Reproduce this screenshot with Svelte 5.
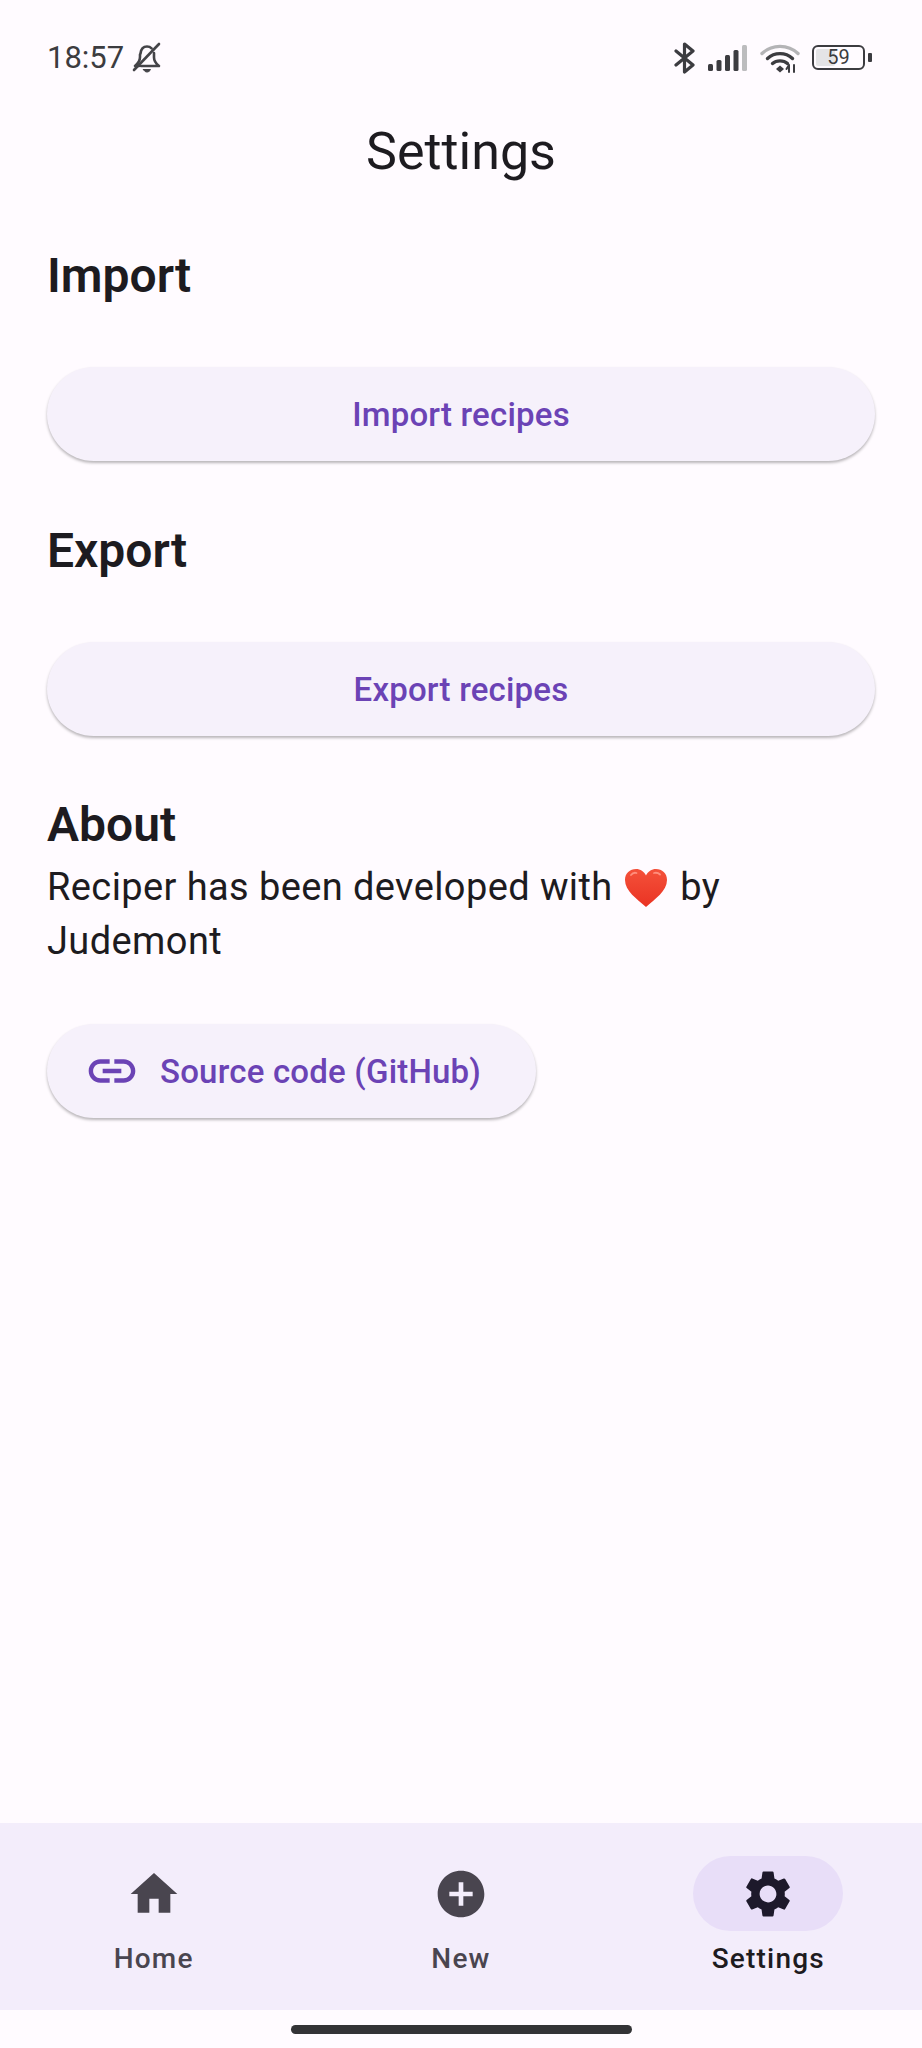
<script>
    const NAV = [
        { label: 'Home', d: 'M10 20v-6h4v6h5v-8h3L12 3 2 12h3v8z' },
        { label: 'New', d: 'M12 2C6.48 2 2 6.48 2 12s4.48 10 10 10 10-4.48 10-10S17.52 2 12 2zm5 11h-4v4h-2v-4H7v-2h4V7h2v4h4v2z' },
        {
            label: 'Settings',
            active: true,
            d: 'M19.14 12.94c.04-.3.06-.61.06-.94 0-.32-.02-.64-.07-.94l2.03-1.58c.18-.14.23-.41.12-.61l-1.92-3.32c-.12-.22-.37-.29-.59-.22l-2.39.96c-.5-.38-1.03-.7-1.62-.94l-.36-2.54c-.04-.24-.24-.41-.48-.41h-3.84c-.24 0-.43.17-.47.41l-.36 2.54c-.59.24-1.13.57-1.62.94l-2.39-.96c-.22-.08-.47 0-.59.22L2.74 8.87c-.12.21-.08.47.12.61l2.03 1.58c-.05.3-.09.63-.09.94s.02.64.07.94l-2.03 1.58c-.18.14-.23.41-.12.61l1.92 3.32c.12.22.37.29.59.22l2.39-.96c.5.38 1.03.7 1.62.94l.36 2.54c.05.24.24.41.48.41h3.84c.24 0 .44-.17.47-.41l.36-2.54c.59-.24 1.13-.56 1.62-.94l2.39.96c.22.08.47 0 .59-.22l1.92-3.32c.12-.22.07-.47-.12-.61l-2.01-1.58zM12 15.6c-1.98 0-3.6-1.62-3.6-3.6s1.62-3.6 3.6-3.6 3.6 1.62 3.6 3.6-1.62 3.6-3.6 3.6z'
        }
    ];
</script>

<div class="page">
    <div class="status">
        <div class="status-left">
            <span class="time">18:57</span>
            <svg class="bell" viewBox="0 0 32 32" fill="none" stroke="#444448" stroke-width="2.6" stroke-linecap="round" stroke-linejoin="round">
                <path d="M9.500 11.500c.5-4.200 3-7 6.500-7 1.800 0 3.400.6 4.600 1.800M23 11v4.500c0 3.500 1.800 6 5 8.500H10" />
                <path d="M9 12.500V15c0 3.500-2 6.500-5 9h4" />
                <path d="M3 28 28 2" />
                <path d="M12.500 27.500h7c-.5 1.500-2 2.500-3.500 2.500s-3-1-3.500-2.500z" fill="#444448" stroke-width="1" />
            </svg>
        </div>
        <div class="status-right">
            <svg class="bt" viewBox="0 0 22 32" fill="none" stroke="#3c3c40" stroke-width="3.200" stroke-linejoin="round" stroke-linecap="round">
                <path d="M2 9 19 23 10.500 30V2L19 9 2 23" />
            </svg>
            <svg class="bars" viewBox="0 0 40 26">
                <rect x="0" y="19" width="5" height="7" rx="1.500" fill="#3c3c40" />
                <rect x="8.500" y="15" width="5" height="11" rx="1.500" fill="#3c3c40" />
                <rect x="17" y="10" width="5" height="16" rx="1.500" fill="#3c3c40" />
                <rect x="25.500" y="5" width="5" height="21" rx="1.500" fill="#3c3c40" />
                <rect x="34" y="0" width="5" height="26" rx="1.500" fill="#bcbcbe" />
            </svg>
            <svg class="wifi" viewBox="0 0 40 30" fill="none" stroke-linecap="round">
                <path d="M2 10.500C12 1 28 1 38 10.500" stroke="#b4b4b6" stroke-width="3.400" />
                <path d="M7.500 15.500c7-6.500 18-6.500 25 0" stroke="#3c3c40" stroke-width="3.400" />
                <path d="M12.500 20.500c4-3.500 11-3.500 15 0" stroke="#3c3c40" stroke-width="3.400" />
                <path d="M20 22.500l4 3.500-4 3.500-4-3.500z" fill="#3c3c40" />
                <path d="M29 22v7M26.500 26l2.500-4M34 22v7" stroke="#3c3c40" stroke-width="2" />
            </svg>
            <div class="battery">
                <div class="battery-body">
                    <div class="battery-level" style="width: {59 * 0.7}%"></div>
                    <span class="battery-text">59</span>
                </div>
                <div class="battery-nub"></div>
            </div>
        </div>
    </div>

    <h1 class="title">Settings</h1>

    <main class="content">
        <h2 class="heading">Import</h2>
        <button class="btn wide">Import recipes</button>

        <h2 class="heading spaced">Export</h2>
        <button class="btn wide">Export recipes</button>

        <h2 class="heading about">About</h2>
        <p class="body">
            Reciper has been developed with
            <svg class="heart" viewBox="0 0 44 40">
                <defs>
                    <linearGradient id="heartFill" x1="0" y1="0" x2="0" y2="1">
                        <stop offset="0" stop-color="#f4513a" />
                        <stop offset="1" stop-color="#ea3323" />
                    </linearGradient>
                </defs>
                <path d="M22 39C13 31 1 23 1 12 1 5 6 1 12 1c4.500 0 8 2.500 10 6.500C24 3.500 27.500 1 32 1c6 0 11 4 11 11 0 11-12 19-21 27z" fill="url(#heartFill)" />
                <path d="M7 7c1.500-2 4-2.500 5.500-2" stroke="#ff8f7d" stroke-width="1.800" stroke-linecap="round" fill="none" />
                <path d="M30 5c2-.5 4.500 0 6 1.500" stroke="#ff8f7d" stroke-width="1.800" stroke-linecap="round" fill="none" />
            </svg>
            by Judemont
        </p>
        <button class="btn source">
            <svg class="link" viewBox="0 0 24 24">
                <path d="M3.900 12c0-1.710 1.390-3.100 3.100-3.100h4V7H7c-2.760 0-5 2.240-5 5s2.240 5 5 5h4v-1.900H7c-1.710 0-3.100-1.390-3.100-3.100zM8 13h8v-2H8v2zm9-6h-4v1.900h4c1.710 0 3.100 1.390 3.100 3.100s-1.390 3.100-3.100 3.100h-4V17h4c2.760 0 5-2.240 5-5s-2.240-5-5-5z" fill="#6b43b5" />
            </svg>
            Source code (GitHub)
        </button>
    </main>

    <nav class="nav">
        {#each NAV as item}
            <div class="nav-item" class:active={item.active}>
                <div class="pill">
                    <svg viewBox="0 0 24 24"><path d={item.d} /></svg>
                </div>
                <span class="nav-label">{item.label}</span>
            </div>
        {/each}
    </nav>

    <div class="gesture">
        <div class="gesture-bar"></div>
    </div>
</div>

<style>
    :global(body) {
        background: #fffbff;
    }

    .page {
        height: 2048px;
        display: flex;
        flex-direction: column;
        font-family: Roboto, sans-serif;
        color: #1d1b20;
        background: #fffbff;
    }

    .status {
        height: 115px;
        flex: none;
        display: flex;
        justify-content: space-between;
        align-items: center;
        padding: 0 50px 0 47px;
    }

    .status-left,
    .status-right {
        display: flex;
        align-items: center;
    }

    .time {
        font-size: 31px;
        color: #3c3c40;
    }

    .bell {
        width: 32px;
        height: 32px;
        margin-left: 7px;
    }

    .bt {
        width: 22px;
        height: 32px;
    }

    .bars {
        width: 40px;
        height: 26px;
        margin-left: 12px;
    }

    .wifi {
        width: 40px;
        height: 30px;
        margin-left: 12px;
    }

    .battery {
        display: flex;
        align-items: center;
        margin-left: 12px;
    }

    .battery-body {
        position: relative;
        width: 53px;
        height: 25px;
        box-sizing: border-box;
        border: 2.500px solid #3c3c40;
        border-radius: 6px;
        padding: 2px;
        display: flex;
    }

    .battery-level {
        background: #e4e4e6;
        border-radius: 2px;
    }

    .battery-text {
        position: absolute;
        inset: 0;
        text-align: center;
        font-size: 20px;
        line-height: 20px;
        color: #3c3c40;
    }

    .battery-nub {
        width: 4px;
        height: 9px;
        margin-left: 3px;
        border-radius: 1px;
        background: #3c3c40;
    }

    .title {
        margin: 0;
        height: 74px;
        flex: none;
        font-size: 52px;
        font-weight: 400;
        line-height: 74px;
        text-align: center;
    }

    .content {
        flex: 1;
        padding: 0 47px;
        display: flex;
        flex-direction: column;
        align-items: flex-start;
    }

    .heading {
        margin: 0;
        font-size: 48px;
        font-weight: 600;
        line-height: 56px;
    }

    .content > .heading:first-child {
        margin-top: 59px;
        margin-bottom: 63px;
    }

    .heading.spaced {
        margin-top: 62px;
        margin-bottom: 63px;
    }

    .heading.about {
        margin-top: 61px;
    }

    .body {
        margin: 7px 0 56px;
        font-size: 38px;
        line-height: 54px;
        letter-spacing: 0.4px;
        width: 720px;
        height: 108px;
    }

    .heart {
        width: 44px;
        height: 40px;
        margin: 0 2px 0 2px;
        vertical-align: -8px;
    }

    .btn {
        height: 94px;
        border: none;
        border-radius: 47px;
        background: #f6f1fb;
        box-shadow: 0 2px 3px rgba(0, 0, 0, 0.28);
        color: #6b43b5;
        font-family: Roboto, sans-serif;
        font-size: 33px;
        font-weight: 500;
        letter-spacing: 0.2px;
        display: flex;
        align-items: center;
        justify-content: center;
        padding: 0;
    }

    .btn.wide {
        width: 828px;
    }

    .btn.source {
        width: 489px;
        gap: 20px;
        justify-content: flex-start;
        padding-left: 37px;
    }

    .link {
        width: 56px;
        height: 56px;
    }

    .nav {
        height: 187px;
        flex: none;
        background: #f3edfb;
        display: flex;
    }

    .nav-item {
        flex: 1;
        display: flex;
        flex-direction: column;
        align-items: center;
        padding-top: 33px;
    }

    .pill {
        width: 150px;
        height: 75px;
        border-radius: 38px;
        display: flex;
        align-items: center;
        justify-content: center;
    }

    .pill svg {
        width: 56px;
        height: 56px;
        fill: #49454f;
    }

    .nav-label {
        margin-top: 8px;
        font-size: 28px;
        font-weight: 500;
        letter-spacing: 1.200px;
        line-height: 40px;
        color: #49454f;
    }

    .nav-item.active .pill {
        background: #e8def8;
    }

    .nav-item.active .pill svg {
        fill: #1d192b;
    }

    .nav-item.active .nav-label {
        color: #1d1b20;
    }

    .gesture {
        height: 38px;
        flex: none;
        display: flex;
        justify-content: center;
        padding-top: 15px;
        box-sizing: border-box;
    }

    .gesture-bar {
        width: 341px;
        height: 9px;
        border-radius: 5px;
        background: #333336;
    }
</style>
